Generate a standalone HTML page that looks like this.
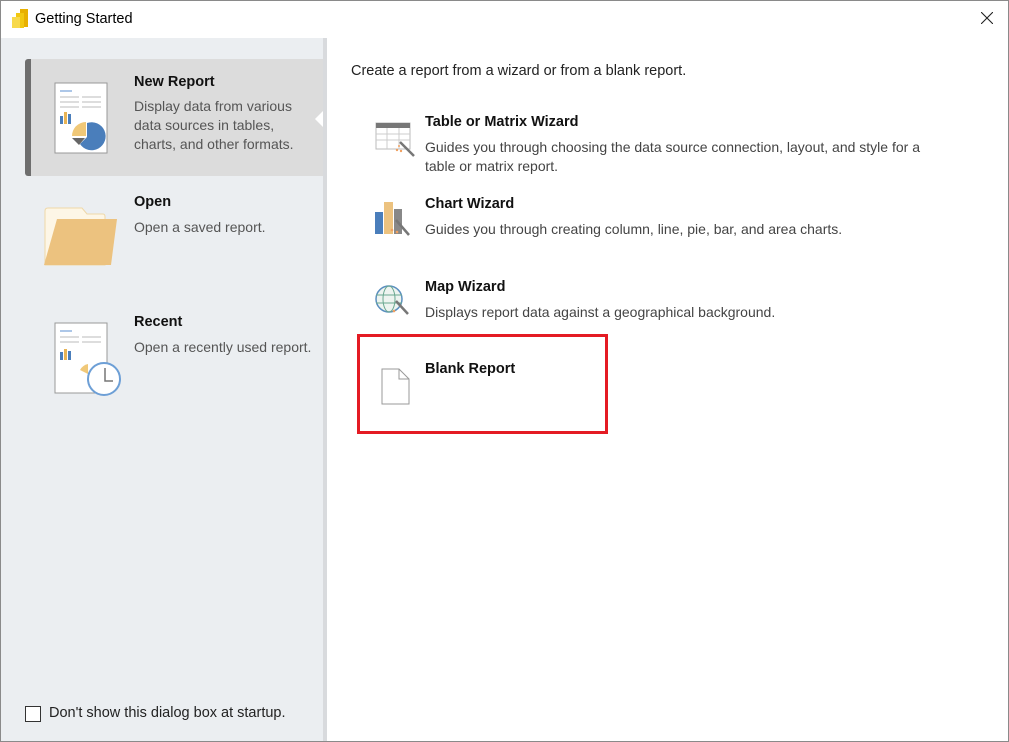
<!DOCTYPE html>
<html><head><style>
*{margin:0;padding:0;box-sizing:border-box}
body{width:1009px;height:742px;position:relative;background:#fff;font-family:"Segoe UI","Liberation Sans",sans-serif;color:#000;overflow:hidden}
.a{position:absolute}
.t{font-size:14.5px;font-weight:bold;color:#111}
.d{font-size:14px;color:#555;line-height:19px}
.rd{font-size:14px;color:#444;line-height:19px}
</style></head><body>
<div class="a" style="left:0;top:38px;width:323px;height:704px;background:#ebeef1"></div>
<div class="a" style="left:323px;top:38px;width:4px;height:704px;background:#d8dadd"></div>
<div class="a" style="left:0;top:0;width:1009px;height:742px;border:1px solid #8a8a8a;z-index:5"></div>
<svg class="a" style="left:11px;top:9px" width="20" height="20" viewBox="0 0 20 20"><rect x="9" y="0" width="8" height="18" fill="#e8b000"/><rect x="5" y="4" width="8" height="15" fill="#f2c811"/><rect x="1" y="8" width="8" height="11" fill="#f7d94c"/></svg>
<div class="a" style="left:35px;top:11px;font-size:14.5px">Getting Started</div>
<svg class="a" style="left:981px;top:12px" width="12" height="12" viewBox="0 0 12 12"><path d="M0 0L12 12M12 0L0 12" stroke="#222" stroke-width="1.1"/></svg>
<div class="a" style="left:25px;top:59px;width:298px;height:117px;background:#dcdcdc;border-radius:3px 0 0 3px;border-left:6px solid #6e6e6e"></div>
<div class="a" style="left:315px;top:111px;width:0;height:0;border-top:8px solid transparent;border-bottom:8px solid transparent;border-right:8px solid #fff"></div>
<svg class="a" style="left:54px;top:82px" width="54" height="72" viewBox="0 0 54 72"><rect x="1" y="1" width="52" height="70" fill="#fff" stroke="#999"/><line x1="6" y1="9" x2="18" y2="9" stroke="#5b8fd0"/><g stroke="#bbb"><line x1="6" y1="15" x2="25" y2="15"/><line x1="28" y1="15" x2="47" y2="15"/><line x1="6" y1="20" x2="25" y2="20"/><line x1="28" y1="20" x2="47" y2="20"/><line x1="6" y1="25" x2="25" y2="25"/><line x1="28" y1="25" x2="47" y2="25"/></g><rect x="6" y="34" width="3" height="8" fill="#4a7ebb"/><rect x="10" y="30" width="3" height="12" fill="#e8b455"/><rect x="14" y="32" width="3" height="10" fill="#4a7ebb"/><path d="M33 41 A14 14 0 1 1 26 62 L33 55Z" fill="#4a7ebb"/><path d="M32 40 L32 54 L18 54 A14 14 0 0 1 32 40Z" fill="#f0c878"/><path d="M18 56 L31 56 L25 63Z" fill="#666"/></svg>
<div class="a t" style="left:134px;top:74px">New Report</div>
<div class="a d" style="left:134px;top:97px">Display data from various<br>data sources in tables,<br>charts, and other formats.</div>
<svg class="a" style="left:44px;top:207px" width="74" height="60" viewBox="0 0 74 60"><path d="M1 4 Q1 1 4 1 H38 L43 7 H59 Q61 7 61 10 V58 H1Z" fill="#fdf6e6" stroke="#efd8a8"/><path d="M13 12 H73 L67 58 H0Z" fill="#ecc27f"/></svg>
<div class="a t" style="left:134px;top:194px">Open</div>
<div class="a d" style="left:134px;top:218px">Open a saved report.</div>
<svg class="a" style="left:54px;top:322px" width="68" height="76" viewBox="0 0 68 76"><rect x="1" y="1" width="52" height="70" fill="#fff" stroke="#999"/><line x1="6" y1="9" x2="18" y2="9" stroke="#5b8fd0"/><g stroke="#bbb"><line x1="6" y1="15" x2="25" y2="15"/><line x1="28" y1="15" x2="47" y2="15"/><line x1="6" y1="20" x2="25" y2="20"/><line x1="28" y1="20" x2="47" y2="20"/></g><rect x="6" y="30" width="3" height="8" fill="#4a7ebb"/><rect x="10" y="27" width="3" height="11" fill="#e8b455"/><rect x="14" y="29" width="3" height="9" fill="#4a7ebb"/><path d="M26 48 A12 12 0 0 1 34 42 L34 52Z" fill="#f0c878"/><circle cx="50" cy="57" r="16" fill="#fff" stroke="#6d9fd6" stroke-width="2"/><path d="M51 46 V59 H59" fill="none" stroke="#777" stroke-width="1.5"/></svg>
<div class="a t" style="left:134px;top:314px">Recent</div>
<div class="a d" style="left:134px;top:338px">Open a recently used report.</div>
<div class="a" style="left:25px;top:706px;width:16px;height:16px;border:1px solid #333;background:#fff"></div>
<div class="a" style="left:49px;top:705px;font-size:14.5px;color:#222">Don't show this dialog box at startup.</div>
<div class="a" style="left:351px;top:63px;font-size:14.5px;color:#222">Create a report from a wizard or from a blank report.</div>
<svg class="a" style="left:375px;top:120px" width="42" height="38" viewBox="0 0 42 38"><rect x="1" y="3" width="34" height="26" fill="#fff" stroke="#bbb"/><rect x="1" y="3" width="34" height="5" fill="#777"/><g stroke="#ccc"><line x1="1" y1="14" x2="35" y2="14"/><line x1="1" y1="20" x2="35" y2="20"/><line x1="12" y1="8" x2="12" y2="29"/><line x1="24" y1="8" x2="24" y2="29"/></g><line x1="25" y1="22" x2="39" y2="36" stroke="#777" stroke-width="2.5"/><circle cx="22" cy="30" r="1.2" fill="#f0a060"/><circle cx="26" cy="31" r="1.2" fill="#f0a060"/><circle cx="24" cy="26" r="1" fill="#f0a060"/></svg>
<div class="a t" style="left:425px;top:114px">Table or Matrix Wizard</div>
<div class="a rd" style="left:425px;top:138px">Guides you through choosing the data source connection, layout, and style for a<br>table or matrix report.</div>
<svg class="a" style="left:374px;top:200px" width="40" height="40" viewBox="0 0 40 40"><rect x="1" y="12" width="8" height="22" fill="#4a7ebb"/><rect x="10" y="2" width="9" height="32" fill="#ecc27f"/><rect x="20" y="9" width="8" height="25" fill="#888"/><line x1="22" y1="20" x2="35" y2="35" stroke="#777" stroke-width="2.5"/><circle cx="18" cy="30" r="1.3" fill="#f0a060"/><circle cx="23" cy="32" r="1.3" fill="#f0a060"/></svg>
<div class="a t" style="left:425px;top:196px">Chart Wizard</div>
<div class="a rd" style="left:425px;top:220px">Guides you through creating column, line, pie, bar, and area charts.</div>
<svg class="a" style="left:374px;top:283px" width="40" height="36" viewBox="0 0 40 36"><circle cx="15" cy="16" r="13" fill="#eef4f0" stroke="#5b8fbf" stroke-width="1.5"/><ellipse cx="15" cy="16" rx="6" ry="13" fill="none" stroke="#6aa890"/><line x1="2" y1="12" x2="28" y2="12" stroke="#6aa890"/><line x1="2" y1="20" x2="28" y2="20" stroke="#6aa890"/><line x1="22" y1="18" x2="34" y2="31" stroke="#777" stroke-width="2.5"/><circle cx="20" cy="28" r="1.3" fill="#f0a060"/></svg>
<div class="a t" style="left:425px;top:279px">Map Wizard</div>
<div class="a rd" style="left:425px;top:303px">Displays report data against a geographical background.</div>
<div class="a" style="left:357px;top:334px;width:251px;height:100px;border:3px solid #e41b23"></div>
<svg class="a" style="left:381px;top:368px" width="30" height="38" viewBox="0 0 30 38"><path d="M1 1 H18 L28 11 V36 H1Z" fill="#fff" stroke="#999"/><path d="M18 1 V11 H28" fill="none" stroke="#999"/></svg>
<div class="a t" style="left:425px;top:361px">Blank Report</div>
</body></html>
